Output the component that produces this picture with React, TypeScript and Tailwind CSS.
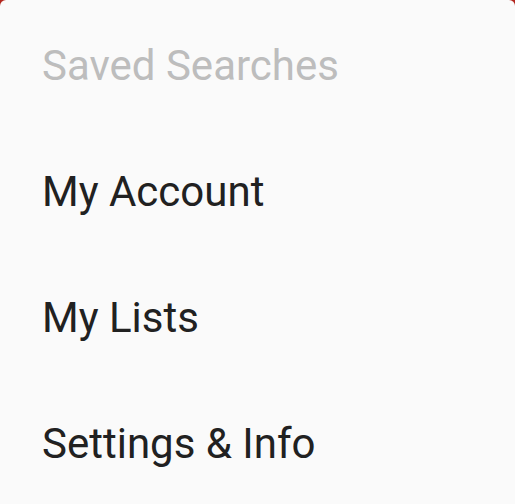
const items = [
  { label: 'Saved Searches', disabled: true },
  { label: 'My Account' },
  { label: 'My Lists' },
  { label: 'Settings & Info' },
]

export default function App() {
  return (
    <div className="h-[504px] w-[515px] bg-[#b3261e]">
      <div
        className="flex h-full w-full flex-col rounded-t-[6px] bg-[#fafafa]"
        style={{ fontFamily: 'Roboto, "Noto Sans", sans-serif' }}
      >
        {items.map((item) => (
          <div
            key={item.label}
            className={`flex h-[126px] items-center pl-[42px] pt-[4px] text-[42px] leading-normal ${
              item.disabled ? 'text-[#bdbdbd]' : 'text-[#212121]'
            }`}
          >
            {item.label}
          </div>
        ))}
      </div>
    </div>
  )
}
